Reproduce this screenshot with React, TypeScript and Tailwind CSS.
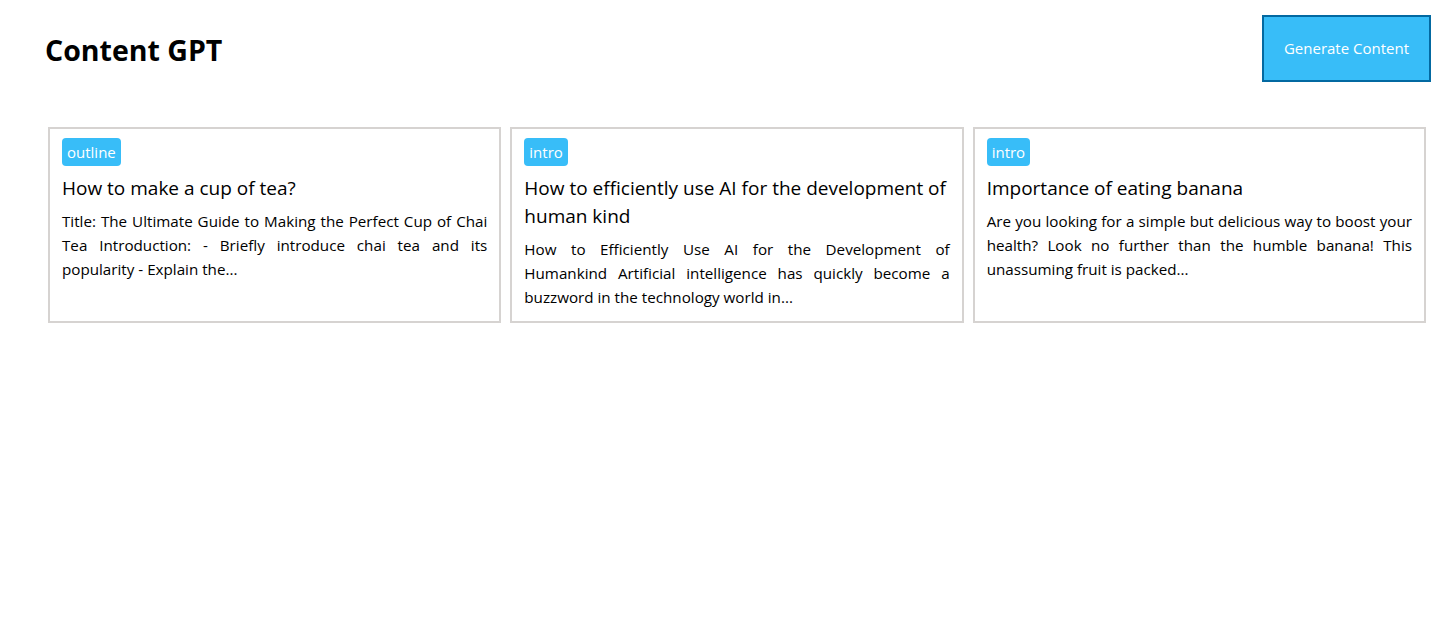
const posts = [
  {
    tag: "outline",
    title: "How to make a cup of tea?",
    body: "Title: The Ultimate Guide to Making the Perfect Cup of Chai Tea Introduction: - Briefly introduce chai tea and its popularity - Explain the...",
  },
  {
    tag: "intro",
    title: "How to efficiently use AI for the development of human kind",
    body: "How to Efficiently Use AI for the Development of Humankind Artificial intelligence has quickly become a buzzword in the technology world in...",
  },
  {
    tag: "intro",
    title: "Importance of eating banana",
    body: "Are you looking for a simple but delicious way to boost your health? Look no further than the humble banana! This unassuming fruit is packed...",
  },
];

function PostCard({ tag, title, body }: { tag: string; title: string; body: string }) {
  return (
    <div className="border-2 border-[#d6d3d1] px-3 pt-[9px] pb-3">
      <span className="inline-block rounded bg-[#38bdf8] px-[5px] text-[15px] leading-7 text-white">
        {tag}
      </span>
      <h2 className="mt-2 text-[19px] leading-7 text-black">{title}</h2>
      <p className="mt-[7px] text-justify text-[15.2px] leading-6 text-black">{body}</p>
    </div>
  );
}

export default function App() {
  return (
    <div
      className="min-h-screen bg-white"
      style={{ fontFamily: '"Segoe UI", "Open Sans", "Noto Sans", sans-serif' }}
    >
      <header className="flex items-center justify-between pt-[15px] pl-[45px] pr-[23px]">
        <h1 className="mt-[4px] text-[28.5px] font-bold text-black">Content GPT</h1>
        <button className="h-[67px] w-[169px] border-2 border-[#0369a1] bg-[#38bdf8] text-[15px] text-white">
          Generate Content
        </button>
      </header>

      <main className="grid grid-cols-3 gap-[9px] pt-[45px] pl-[48px] pr-[28px]">
        {posts.map((p, i) => (
          <PostCard key={i} {...p} />
        ))}
      </main>
    </div>
  );
}
